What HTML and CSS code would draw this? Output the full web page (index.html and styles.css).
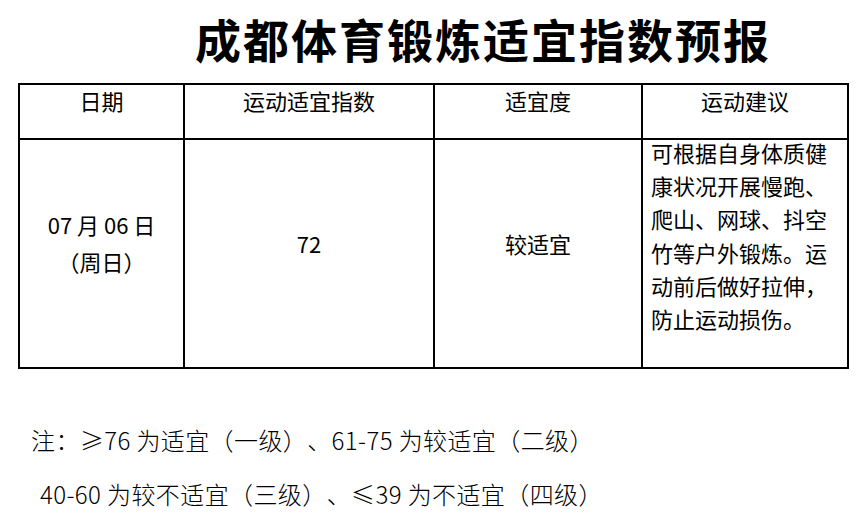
FILE: index.html
```html
<!DOCTYPE html>
<html lang="zh-CN">
<head>
<meta charset="utf-8">
<title>成都体育锻炼适宜指数预报</title>
<link rel="stylesheet" href="styles.css">
</head>
<body>
<div class="page">
  <h1 class="title">成都体育锻炼适宜指数预报</h1>
  <div class="table">
    <div class="cell head">日期</div>
    <div class="cell head">运动适宜指数</div>
    <div class="cell head">适宜度</div>
    <div class="cell head">运动建议</div>
    <div class="cell body date"><div class="date-text">07 月 06 日<br>（周日）</div></div>
    <div class="cell body">72</div>
    <div class="cell body">较适宜</div>
    <div class="cell advice"><p class="advice-text">可根据自身体质健康状况开展慢跑、爬山、网球、抖空竹等户外锻炼。运动前后做好拉伸，防止运动损伤。</p></div>
  </div>
  <div class="notes">
    <p class="note note-1">注：≥76 为适宜（一级）、61-75 为较适宜（二级）</p>
    <p class="note note-2">40-60 为较不适宜（三级）、≤39 为不适宜（四级）</p>
  </div>
</div>
</body>
</html>
```
FILE: styles.css
```css
html, body {
  margin: 0;
  padding: 0;
  background: #ffffff;
}
body {
  width: 864px;
  height: 514px;
  overflow: hidden;
  font-family: "Noto Sans CJK SC", "Noto Sans", sans-serif;
  color: #000000;
  text-spacing-trim: space-all;
}
.page {
  display: flex;
  flex-direction: column;
}
.title {
  margin: 0;
  height: 83px;
  padding-left: 195px;
  font-size: 46px;
  line-height: 76px;
  font-weight: 700;
  letter-spacing: 2px;
  white-space: nowrap;
}
.table {
  margin-left: 18px;
  width: 831px;
  box-sizing: border-box;
  display: grid;
  grid-template-columns: 163px 248px 206px 204px;
  grid-template-rows: 53px 227px;
  gap: 2px;
  padding: 2px;
  background: #000000;
}
.cell {
  background: #ffffff;
  font-size: 22px;
  color: #000000;
}
.head {
  text-align: center;
  line-height: 30px;
  padding-top: 0;
}
.body {
  display: flex;
  align-items: center;
  justify-content: center;
  padding-bottom: 22px;
  text-align: center;
}
.date-text {
  line-height: 37px;
}
.advice {
  padding: 0 8px;
}
.advice-text {
  margin: -4px 0 0 0;
  line-height: 33.2px;
}
.notes {
  margin-top: 44px;
}
.note {
  margin: 0;
  font-size: 24px;
  line-height: 54px;
  font-weight: 300;
  letter-spacing: 0.4px;
  white-space: nowrap;
}
.note-1 {
  padding-left: 31px;
}
.note-2 {
  padding-left: 40px;
}
```
